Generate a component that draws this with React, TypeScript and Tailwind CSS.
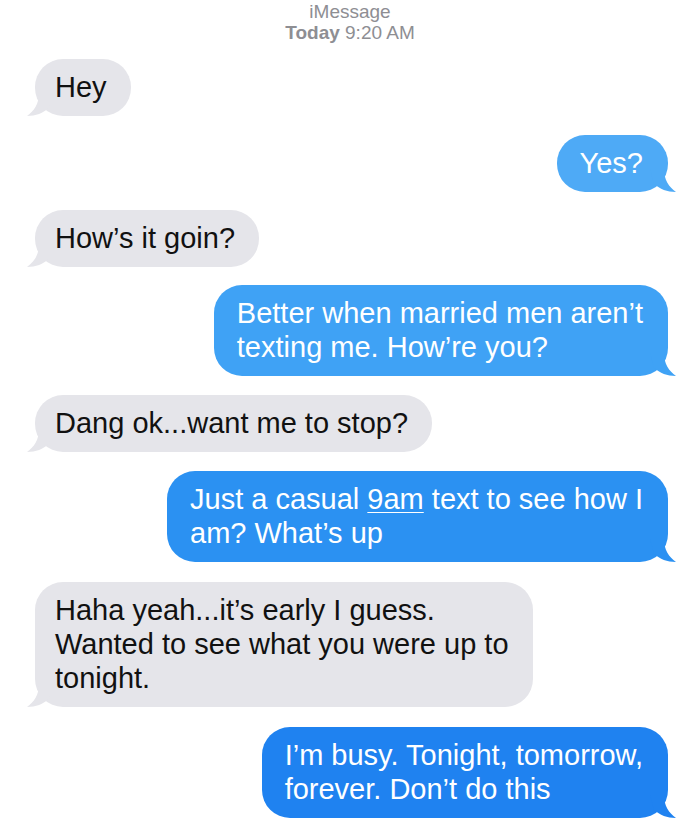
import React from 'react';

type Msg = {
  id: number;
  from: 'them' | 'me';
  lines: React.ReactNode[];
  gap: string;
  bg?: string;
  tail?: string;
};

const GRAY = '#e5e5ea';

const messages: Msg[] = [
  { id: 1, from: 'them', lines: ['Hey'], gap: 'mt-[17px]' },
  { id: 2, from: 'me', lines: ['Yes?'], gap: 'mt-[19px]', bg: 'bg-[#4eaaf6]', tail: '#4eaaf6' },
  { id: 3, from: 'them', lines: ['How’s it goin?'], gap: 'mt-[18px]' },
  {
    id: 4,
    from: 'me',
    lines: ['Better when married men aren’t', 'texting me. How’re you?'],
    gap: 'mt-[18px]',
    bg: 'bg-[#3fa2f5]',
    tail: '#3fa2f5',
  },
  { id: 5, from: 'them', lines: ['Dang ok...want me to stop?'], gap: 'mt-[19px]' },
  {
    id: 6,
    from: 'me',
    lines: [
      <>
        Just a casual <span className="underline decoration-1 underline-offset-[3px]">9am</span> text to see how I
      </>,
      'am? What’s up',
    ],
    gap: 'mt-[19px]',
    bg: 'bg-[#2b91f2]',
    tail: '#2b91f2',
  },
  {
    id: 7,
    from: 'them',
    lines: ['Haha yeah...it’s early I guess.', 'Wanted to see what you were up to', 'tonight.'],
    gap: 'mt-[20px]',
  },
  {
    id: 8,
    from: 'me',
    lines: ['I’m busy. Tonight, tomorrow,', 'forever. Don’t do this'],
    gap: 'mt-[20px]',
    bg: 'bg-[#1f82f0]',
    tail: '#1f82f0',
  },
];

// little hook under the bubble's bottom corner
function Tail({ side, color }: { side: 'left' | 'right'; color: string }) {
  if (side === 'left') {
    return (
      <svg className="absolute -left-[8px] -bottom-[1px]" width="26" height="24" viewBox="0 0 26 24">
        <path d="M26 0 L12 0 C12 11 7 18 0 23 C9 23 16 20 22 15 Z" fill={color} />
      </svg>
    );
  }
  return (
    <svg className="absolute -right-[8px] -bottom-[1px]" width="26" height="24" viewBox="0 0 26 24">
      <path d="M0 0 L14 0 C14 11 19 18 26 23 C17 23 10 20 4 15 Z" fill={color} />
    </svg>
  );
}

export default function App() {
  return (
    <div
      className="w-[700px] h-[823px] bg-white overflow-hidden"
      style={{ fontFamily: '"Liberation Sans", Arial, sans-serif' }}
    >
      <div className="pt-[1px] h-[42px] text-center text-[#8e8e93] text-[19px] leading-[21px]">
        <div>iMessage</div>
        <div>
          <span className="font-bold">Today</span> 9:20 AM
        </div>
      </div>

      <div className="flex flex-col pl-[35px] pr-[32px]">
        {messages.map((m) => {
          const mine = m.from === 'me';
          return (
            <div key={m.id} className={`flex ${mine ? 'justify-end' : 'justify-start'} ${m.gap}`}>
              <div
                className={`relative rounded-[28px] pt-[11px] pb-[12px] text-[29px] leading-[34px] whitespace-nowrap ${
                  mine ? `${m.bg} text-white pl-[23px] pr-[25px]` : 'bg-[#e5e5ea] text-[#111] pl-[20px] pr-[24px]'
                }`}
              >
                <Tail side={mine ? 'right' : 'left'} color={mine ? m.tail! : GRAY} />
                <div className="relative">
                  {m.lines.map((l, i) => (
                    <div key={i}>{l}</div>
                  ))}
                </div>
              </div>
            </div>
          );
        })}
      </div>
    </div>
  );
}
